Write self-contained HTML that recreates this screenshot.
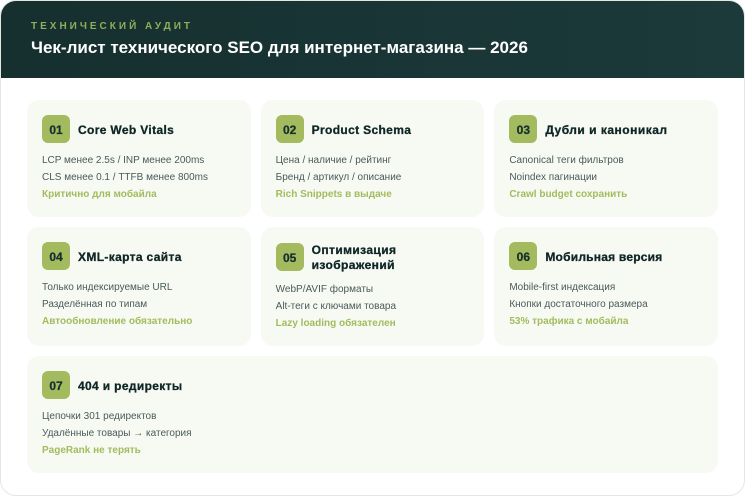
<!DOCTYPE html>
<html lang="ru">
<head>
<meta charset="utf-8">
<title>Чек-лист технического SEO</title>
<style>
*{box-sizing:border-box;margin:0;padding:0}
html,body{width:745px;height:496px;background:#fff;overflow:hidden}
body{font-family:"Liberation Sans",Arial,sans-serif}
.wrap{width:745px;height:496px;background:#fff;border:1px solid #e2e8e0;border-radius:16px;overflow:hidden;position:relative}
.head{height:77px;background:linear-gradient(90deg,#162f2f,#1c3a3a);padding:19px 30px 0}
.eyebrow{font-size:10px;font-weight:700;letter-spacing:3px;color:#8fae5a;line-height:12px;text-transform:uppercase;position:relative;top:1px}
.head h1{font-size:17px;font-weight:700;color:#fff;line-height:18px;margin-top:7px}
.grid{position:absolute;left:26px;top:99px;width:691px;display:grid;grid-template-columns:repeat(3,1fr);gap:10px}
.card{background:#f7faf3;border-radius:12px;padding:15px}
.wide{grid-column:1 / 4}
.top{display:flex;align-items:center;gap:8px;margin-bottom:8px}
.num{flex:none;width:28px;height:28px;border-radius:6px;background:#a3bb5e;color:#162f2f;font-size:12px;font-weight:700;-webkit-text-stroke:.25px #162f2f;display:flex;align-items:center;justify-content:center;padding-top:1px}
.top h2{font-size:12px;font-weight:700;color:#0f2626;line-height:15px;letter-spacing:.35px;-webkit-text-stroke:.3px #0f2626;position:relative;top:1px}
.card p{font-size:10px;line-height:17px;color:#4a5a5a;position:relative;top:1px}
.card p.note{font-weight:700;color:#a3bb5e}
</style>
</head>
<body>
<div class="wrap">
  <div class="head">
    <div class="eyebrow">Технический аудит</div>
    <h1>Чек-лист технического SEO для интернет-магазина — 2026</h1>
  </div>
  <div class="grid">
    <div class="card"><div class="top"><div class="num">01</div><h2>Core Web Vitals</h2></div>
      <p>LCP менее 2.5s / INP менее 200ms</p><p>CLS менее 0.1 / TTFB менее 800ms</p><p class="note">Критично для мобайла</p></div>
    <div class="card"><div class="top"><div class="num">02</div><h2>Product Schema</h2></div>
      <p>Цена / наличие / рейтинг</p><p>Бренд / артикул / описание</p><p class="note">Rich Snippets в выдаче</p></div>
    <div class="card"><div class="top"><div class="num">03</div><h2 style="letter-spacing:.5px">Дубли и каноникал</h2></div>
      <p>Canonical теги фильтров</p><p>Noindex пагинации</p><p class="note">Crawl budget сохранить</p></div>
    <div class="card"><div class="top"><div class="num">04</div><h2>XML-карта сайта</h2></div>
      <p>Только индексируемые URL</p><p>Разделённая по типам</p><p class="note">Автообновление обязательно</p></div>
    <div class="card"><div class="top"><div class="num">05</div><h2 style="letter-spacing:.4px">Оптимизация изображений</h2></div>
      <p>WebP/AVIF форматы</p><p>Alt-теги с ключами товара</p><p class="note">Lazy loading обязателен</p></div>
    <div class="card"><div class="top"><div class="num">06</div><h2 style="letter-spacing:.22px">Мобильная версия</h2></div>
      <p>Mobile-first индексация</p><p>Кнопки достаточного размера</p><p class="note">53% трафика с мобайла</p></div>
    <div class="card wide"><div class="top"><div class="num">07</div><h2>404 и редиректы</h2></div>
      <p>Цепочки 301 редиректов</p><p>Удалённые товары → категория</p><p class="note">PageRank не терять</p></div>
  </div>
</div>
</body>
</html>
